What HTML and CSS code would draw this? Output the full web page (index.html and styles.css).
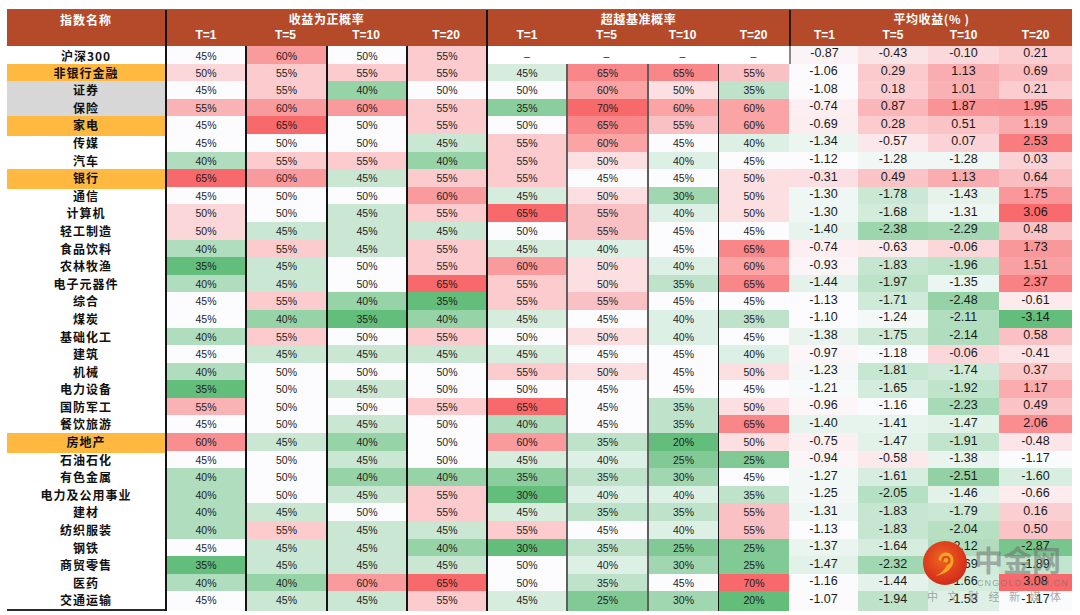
FILE: index.html
```html
<!DOCTYPE html>
<html lang="zh-CN">
<head>
<meta charset="utf-8">
<title>行业胜率表</title>
<link rel="stylesheet" href="styles.css">
</head>
<body>
<div class="sheet">
  <div class="head">
    <div class="h-name">指数名称</div>
    <div class="h-grp g-a">收益为正概率</div>
    <div class="h-grp g-b">超越基准概率</div>
    <div class="h-grp g-c">平均收益(% )</div>
    <div class="h-t g-a">T=1</div><div class="h-t">T=5</div><div class="h-t">T=10</div><div class="h-t">T=20</div>
    <div class="h-t g-b">T=1</div><div class="h-t">T=5</div><div class="h-t">T=10</div><div class="h-t">T=20</div>
    <div class="h-t g-c">T=1</div><div class="h-t">T=5</div><div class="h-t">T=10</div><div class="h-t">T=20</div>
  </div>
  <div class="body">
    <div class="row first"><span class="nm">沪深300</span><span>45%</span><span>60%</span><span>50%</span><span>55%</span><span>–</span><span>–</span><span>–</span><span>–</span><span>-0.87</span><span>-0.43</span><span>-0.10</span><span>0.21</span></div>
    <div class="row"><span class="nm hi">非银行金融</span><span>50%</span><span>55%</span><span>55%</span><span>55%</span><span>45%</span><span>65%</span><span>65%</span><span>55%</span><span>-1.06</span><span>0.29</span><span>1.13</span><span>0.69</span></div>
    <div class="row"><span class="nm gr">证券</span><span>45%</span><span>55%</span><span>40%</span><span>50%</span><span>50%</span><span>60%</span><span>50%</span><span>35%</span><span>-1.08</span><span>0.18</span><span>1.01</span><span>0.21</span></div>
    <div class="row"><span class="nm gr">保险</span><span>55%</span><span>60%</span><span>60%</span><span>55%</span><span>35%</span><span>70%</span><span>60%</span><span>60%</span><span>-0.74</span><span>0.87</span><span>1.87</span><span>1.95</span></div>
    <div class="row"><span class="nm hi">家电</span><span>45%</span><span>65%</span><span>50%</span><span>55%</span><span>50%</span><span>65%</span><span>55%</span><span>60%</span><span>-0.69</span><span>0.28</span><span>0.51</span><span>1.19</span></div>
    <div class="row"><span class="nm">传媒</span><span>45%</span><span>50%</span><span>50%</span><span>45%</span><span>55%</span><span>60%</span><span>45%</span><span>40%</span><span>-1.34</span><span>-0.57</span><span>0.07</span><span>2.53</span></div>
    <div class="row"><span class="nm">汽车</span><span>40%</span><span>55%</span><span>55%</span><span>40%</span><span>55%</span><span>50%</span><span>40%</span><span>45%</span><span>-1.12</span><span>-1.28</span><span>-1.28</span><span>0.03</span></div>
    <div class="row"><span class="nm hi">银行</span><span>65%</span><span>60%</span><span>45%</span><span>55%</span><span>55%</span><span>45%</span><span>45%</span><span>50%</span><span>-0.31</span><span>0.49</span><span>1.13</span><span>0.64</span></div>
    <div class="row"><span class="nm">通信</span><span>45%</span><span>50%</span><span>50%</span><span>60%</span><span>45%</span><span>50%</span><span>30%</span><span>50%</span><span>-1.30</span><span>-1.78</span><span>-1.43</span><span>1.75</span></div>
    <div class="row"><span class="nm">计算机</span><span>50%</span><span>50%</span><span>45%</span><span>55%</span><span>65%</span><span>55%</span><span>40%</span><span>50%</span><span>-1.30</span><span>-1.68</span><span>-1.31</span><span>3.06</span></div>
    <div class="row"><span class="nm">轻工制造</span><span>50%</span><span>45%</span><span>45%</span><span>45%</span><span>50%</span><span>55%</span><span>45%</span><span>45%</span><span>-1.40</span><span>-2.38</span><span>-2.29</span><span>0.48</span></div>
    <div class="row"><span class="nm">食品饮料</span><span>40%</span><span>55%</span><span>45%</span><span>55%</span><span>45%</span><span>40%</span><span>45%</span><span>65%</span><span>-0.74</span><span>-0.63</span><span>-0.06</span><span>1.73</span></div>
    <div class="row"><span class="nm">农林牧渔</span><span>35%</span><span>45%</span><span>50%</span><span>55%</span><span>60%</span><span>50%</span><span>40%</span><span>60%</span><span>-0.93</span><span>-1.83</span><span>-1.96</span><span>1.51</span></div>
    <div class="row"><span class="nm">电子元器件</span><span>40%</span><span>45%</span><span>50%</span><span>65%</span><span>55%</span><span>50%</span><span>35%</span><span>65%</span><span>-1.44</span><span>-1.97</span><span>-1.35</span><span>2.37</span></div>
    <div class="row"><span class="nm">综合</span><span>45%</span><span>55%</span><span>40%</span><span>35%</span><span>55%</span><span>55%</span><span>45%</span><span>45%</span><span>-1.13</span><span>-1.71</span><span>-2.48</span><span>-0.61</span></div>
    <div class="row"><span class="nm">煤炭</span><span>45%</span><span>40%</span><span>35%</span><span>40%</span><span>45%</span><span>45%</span><span>40%</span><span>35%</span><span>-1.10</span><span>-1.24</span><span>-2.11</span><span>-3.14</span></div>
    <div class="row"><span class="nm">基础化工</span><span>40%</span><span>55%</span><span>50%</span><span>55%</span><span>50%</span><span>50%</span><span>40%</span><span>45%</span><span>-1.38</span><span>-1.75</span><span>-2.14</span><span>0.58</span></div>
    <div class="row"><span class="nm">建筑</span><span>45%</span><span>45%</span><span>45%</span><span>45%</span><span>45%</span><span>45%</span><span>45%</span><span>40%</span><span>-0.97</span><span>-1.18</span><span>-0.06</span><span>-0.41</span></div>
    <div class="row"><span class="nm">机械</span><span>40%</span><span>50%</span><span>50%</span><span>50%</span><span>55%</span><span>50%</span><span>45%</span><span>50%</span><span>-1.23</span><span>-1.81</span><span>-1.74</span><span>0.37</span></div>
    <div class="row"><span class="nm">电力设备</span><span>35%</span><span>50%</span><span>45%</span><span>50%</span><span>50%</span><span>45%</span><span>45%</span><span>45%</span><span>-1.21</span><span>-1.65</span><span>-1.92</span><span>1.17</span></div>
    <div class="row"><span class="nm">国防军工</span><span>55%</span><span>50%</span><span>50%</span><span>55%</span><span>65%</span><span>45%</span><span>35%</span><span>50%</span><span>-0.96</span><span>-1.16</span><span>-2.23</span><span>0.49</span></div>
    <div class="row"><span class="nm">餐饮旅游</span><span>45%</span><span>50%</span><span>45%</span><span>50%</span><span>40%</span><span>45%</span><span>35%</span><span>65%</span><span>-1.40</span><span>-1.41</span><span>-1.47</span><span>2.06</span></div>
    <div class="row"><span class="nm hi">房地产</span><span>60%</span><span>45%</span><span>40%</span><span>50%</span><span>60%</span><span>35%</span><span>20%</span><span>50%</span><span>-0.75</span><span>-1.47</span><span>-1.91</span><span>-0.48</span></div>
    <div class="row"><span class="nm">石油石化</span><span>45%</span><span>50%</span><span>45%</span><span>50%</span><span>45%</span><span>40%</span><span>25%</span><span>25%</span><span>-0.94</span><span>-0.58</span><span>-1.38</span><span>-1.17</span></div>
    <div class="row"><span class="nm">有色金属</span><span>40%</span><span>50%</span><span>40%</span><span>40%</span><span>35%</span><span>35%</span><span>30%</span><span>45%</span><span>-1.27</span><span>-1.61</span><span>-2.51</span><span>-1.60</span></div>
    <div class="row"><span class="nm">电力及公用事业</span><span>40%</span><span>50%</span><span>45%</span><span>55%</span><span>30%</span><span>40%</span><span>40%</span><span>35%</span><span>-1.25</span><span>-2.05</span><span>-1.46</span><span>-0.66</span></div>
    <div class="row"><span class="nm">建材</span><span>40%</span><span>45%</span><span>50%</span><span>55%</span><span>45%</span><span>35%</span><span>35%</span><span>55%</span><span>-1.31</span><span>-1.83</span><span>-1.79</span><span>0.16</span></div>
    <div class="row"><span class="nm">纺织服装</span><span>40%</span><span>55%</span><span>45%</span><span>45%</span><span>55%</span><span>45%</span><span>40%</span><span>55%</span><span>-1.13</span><span>-1.83</span><span>-2.04</span><span>0.50</span></div>
    <div class="row"><span class="nm">钢铁</span><span>45%</span><span>45%</span><span>45%</span><span>40%</span><span>30%</span><span>35%</span><span>25%</span><span>25%</span><span>-1.37</span><span>-1.64</span><span>-2.12</span><span>-2.87</span></div>
    <div class="row"><span class="nm">商贸零售</span><span>35%</span><span>45%</span><span>45%</span><span>45%</span><span>50%</span><span>40%</span><span>30%</span><span>25%</span><span>-1.47</span><span>-2.32</span><span>-1.69</span><span>-1.89</span></div>
    <div class="row"><span class="nm">医药</span><span>40%</span><span>40%</span><span>60%</span><span>65%</span><span>50%</span><span>35%</span><span>45%</span><span>70%</span><span>-1.16</span><span>-1.44</span><span>-1.66</span><span>3.08</span></div>
    <div class="row"><span class="nm">交通运输</span><span>45%</span><span>45%</span><span>45%</span><span>55%</span><span>45%</span><span>25%</span><span>30%</span><span>20%</span><span>-1.07</span><span>-1.94</span><span>-1.53</span><span>-1.17</span></div>
  </div>
</div>

<div class="wm">
  <svg class="wm-logo" viewBox="0 0 44 44" width="44" height="44" aria-hidden="true">
    <defs>
      <radialGradient id="wmg" cx="45%" cy="40%" r="60%">
        <stop offset="0" stop-color="#f0661f"/>
        <stop offset="1" stop-color="#d3291b"/>
      </radialGradient>
    </defs>
    <circle cx="22" cy="22" r="22" fill="url(#wmg)"/>
    <path d="M15.5 19 a7.5 7.5 0 1 1 15 0 c0 8 -7 14 -18 16 c6 -3 11 -8 12 -13 z" fill="#f7a623"/>
    <path d="M19.5 19.5 a3.5 3.5 0 1 1 5 3" stroke="#e24a1d" stroke-width="2.2" fill="none" stroke-linecap="round"/>
  </svg>
  <div class="wm-name">中金网</div>
  <div class="wm-url">CNGOLD.COM.CN</div>
  <div class="wm-tag">中文财经新媒体</div>
</div>

<script src="script.js"></script>
</body>
</html>
```

FILE: styles.css
```css
html, body {
  margin: 0;
  padding: 0;
  background: #ffffff;
}

body {
  font-family: "Liberation Sans", "Noto Sans CJK SC", sans-serif;
  color: #1f1f1f;
}

.sheet {
  margin: 9px 0 0 7px;
  width: 1065px;
}

.head,
.row {
  display: grid;
  grid-template-columns: 158px 80px 81px 80px 80px 80px 81px 71px 71px 69px 70px 71px 73px;
}

.head {
  grid-template-rows: 18px 18px;
  background: #b44a29;
  border-top: 1px solid #6a6a6a;
  color: #ffffff;
  font-weight: 700;
  font-size: 12px;
}

.head > div {
  display: flex;
  align-items: center;
  justify-content: center;
  box-sizing: border-box;
}

.h-name {
  grid-row: 1 / 3;
  grid-column: 1;
  align-items: flex-start !important;
  padding-top: 1px;
  font-family: "Noto Sans CJK SC", sans-serif;
  letter-spacing: 1px;
}

.h-grp {
  grid-row: 1;
  grid-column: span 4;
  padding-bottom: 2px;
  font-family: "Noto Sans CJK SC", sans-serif;
  letter-spacing: 0.6px;
}

.h-t {
  grid-row: 2;
  padding-bottom: 4px;
}

.g-a,
.g-b {
  border-left: 2px solid #141414;
}

.g-c {
  border-left: 2px solid #2a1a14;
}

.body {
  border-bottom: 2px solid #2b2b2b;
}

.row {
  height: 17.6px;
}

.row > span {
  display: flex;
  align-items: center;
  justify-content: center;
  box-sizing: border-box;
  padding-bottom: 2px;
  font-size: 10.5px;
  color: #1c1c1c;
  white-space: nowrap;
}

.row > span:nth-child(n+2):nth-child(-n+6) {
  border-left: 2px solid #141414;
}

.row > span:nth-child(7),
.row > span:nth-child(8) {
  border-left: 2px solid #5e5e5e;
}

.row > span:nth-child(9) {
  border-left: 1px solid #141414;
}

.row > span:nth-child(n+10) {
  font-size: 12.5px;
  padding-bottom: 5px;
  color: #1a1a1a;
}

.first > span:nth-child(7),
.first > span:nth-child(8),
.first > span:nth-child(9) {
  border-left: none;
}

.first > span:nth-child(n+10) {
  border-left: none;
}

.first > span:nth-child(10) {
  border-left: 2px solid #8a8a8a;
}

.first > span:nth-child(n+10) {
  padding-bottom: 7px;
}

.row > span.nm {
  font-family: "Noto Sans CJK SC", sans-serif;
  font-weight: 700;
  font-size: 12px;
  letter-spacing: 1px;
  padding-bottom: 3px;
  color: #111111;
}

.nm.hi {
  background: #ffb941;
}

.nm.gr {
  background: #d7d7d7;
}

/* watermark overlay */
.wm {
  position: absolute;
  left: 0;
  top: 0;
  width: 0;
  height: 0;
  pointer-events: none;
}

.wm-logo {
  position: absolute;
  left: 923px;
  top: 541px;
}

.wm-name {
  position: absolute;
  left: 974px;
  top: 544px;
  font-family: "Noto Sans CJK SC", sans-serif;
  font-weight: 700;
  font-size: 29px;
  line-height: 31px;
  white-space: nowrap;
  color: rgba(105, 105, 105, 0.5);
}

.wm-url {
  position: absolute;
  left: 977px;
  top: 578px;
  font-family: "Liberation Sans", sans-serif;
  font-size: 9px;
  line-height: 10px;
  letter-spacing: 1.1px;
  white-space: nowrap;
  color: rgba(110, 110, 110, 0.6);
}

.wm-tag {
  position: absolute;
  left: 927px;
  top: 590px;
  font-family: "Noto Sans CJK SC", sans-serif;
  font-size: 11px;
  line-height: 13px;
  letter-spacing: 9.5px;
  white-space: nowrap;
  color: rgba(110, 110, 110, 0.6);
}
```

FILE: script.js
```js
(function () {
  var LO = [99, 190, 123];
  var MID = [252, 252, 255];
  var HI = [248, 105, 107];
  var G3 = [-3.14, -1.13, 3.08];
  // [min, midpoint, max] of the colour scale for each column (index = cell position)
  var P = [null,
    [35, 45, 65], [35, 50, 65], [35, 50, 65], [35, 50, 65],
    [30, 50, 65], [20, 45, 70], [20, 45, 70], [20, 45, 70],
    G3, G3, G3, G3];

  function mix(a, b, t) {
    return [0, 1, 2].map(function (i) {
      return Math.round(a[i] + (b[i] - a[i]) * t);
    });
  }

  function colour(v, p) {
    var t, c;
    if (v <= p[1]) {
      t = Math.min(1, (p[1] - v) / (p[1] - p[0]));
      c = mix(MID, LO, t);
    } else {
      t = Math.min(1, (v - p[1]) / (p[2] - p[1]));
      c = mix(MID, HI, t);
    }
    return "rgb(" + c.join(",") + ")";
  }

  var rows = document.querySelectorAll(".row");
  for (var r = 0; r < rows.length; r++) {
    var cells = rows[r].children;
    for (var i = 1; i < cells.length; i++) {
      var v = parseFloat(cells[i].textContent);
      if (!P[i] || isNaN(v)) continue;
      cells[i].style.backgroundColor = colour(v, P[i]);
    }
  }
})();
```
